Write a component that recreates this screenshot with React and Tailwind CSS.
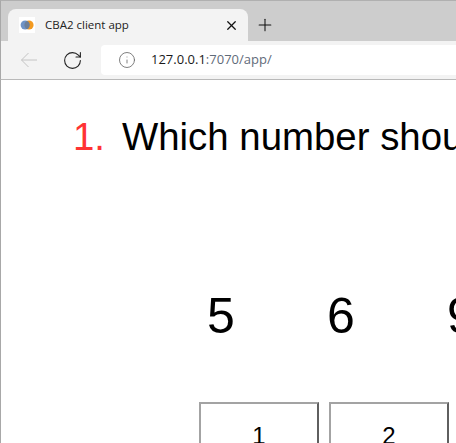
import React from 'react';
import { RotateCw, Info, X, Plus } from 'lucide-react';

const SEQUENCE = [5, 6, 9];
const ANSWERS = [1, 2];

function Browser() {
  return (
    <div className="shrink-0">
      {/* tab strip */}
      <div className="h-[41px] bg-[#cdcdcd] border-t border-t-[#b0b0b0] border-l border-l-[#a8a8a8] pl-[7px] pt-2 flex items-end">
        <div className="w-[240px] h-8 bg-[#f3f3f3] rounded-t-lg flex items-center pl-[11px] pr-[9px]">
          <svg width="16" height="16" viewBox="0 0 16 16" className="shrink-0">
            <rect width="16" height="16" fill="#fff" />
            <circle cx="10" cy="8" r="4.6" fill="#f39a20" />
            <circle cx="6.2" cy="8" r="4.6" fill="#4a78b8" fillOpacity="0.8" />
          </svg>
          <span className="ml-[10px] text-[11.5px] text-[#222] flex-1 font-['Open_Sans',sans-serif]">CBA2 client app</span>
          <X size={15} strokeWidth={2} className="text-[#111]" />
        </div>
        <Plus size={20} strokeWidth={1.25} className="ml-[7px] mb-[6px] text-[#111]" />
      </div>
      {/* toolbar */}
      <div className="h-[39px] bg-[#f3f3f3] border-b border-b-[#b9b9b9] border-l border-l-[#a8a8a8] flex items-center">
        <svg width="18" height="16" viewBox="0 0 18 16" fill="none" stroke="#c4c4c4" strokeWidth="1" className="ml-[19px]">
          <path d="M17 8H1.5M8.5 1 1.5 8l7 7" />
        </svg>
        <RotateCw size={21} strokeWidth={1.25} className="ml-[24px] text-[#222]" />
        <div className="ml-[18px] flex-1 h-[30px] bg-white rounded-l-[4px] flex items-center pl-[17px]">
          <Info size={18} strokeWidth={1.1} className="text-[#666]" />
          <span className="ml-[15px] text-[13px] text-[#1a1a1a] font-['Open_Sans',sans-serif]">
            127.0.0.1<span className="text-[#5f6b7a]">:7070/app/</span>
          </span>
        </div>
      </div>
    </div>
  );
}

export default function App() {
  return (
    <div className="w-[456px] h-[443px] overflow-hidden flex flex-col bg-white font-['Liberation_Sans',Arial,sans-serif]">
      <Browser />
      <div className="flex-1 border-l border-l-[#a8a8a8] overflow-hidden">
        <div className="w-[900px]">
          <div className="pl-[72px] pt-[35px] flex text-[38.4px] leading-[44px] whitespace-nowrap">
            <span className="text-[#ff3333] w-[49px]">1.</span>
            <span className="text-black">Which number should come next?</span>
          </div>
          <div className="ml-[198px] mt-[128px] flex text-[50px] leading-[58px] text-black">
            {SEQUENCE.map((n) => (
              <span key={n} className="w-[120px] pl-2">{n}</span>
            ))}
          </div>
          <div className="ml-[198px] mt-[57px] flex gap-[10px]">
            {ANSWERS.map((n) => (
              <div
                key={n}
                className="w-[120px] h-[80px] border-2 border-t-[#a3a3a3] border-l-[#a3a3a3] border-r-[#5f5f5f] border-b-[#5f5f5f] flex justify-center pt-[18px] text-[24px] leading-[28px] text-black"
              >
                {n}
              </div>
            ))}
          </div>
        </div>
      </div>
    </div>
  );
}
